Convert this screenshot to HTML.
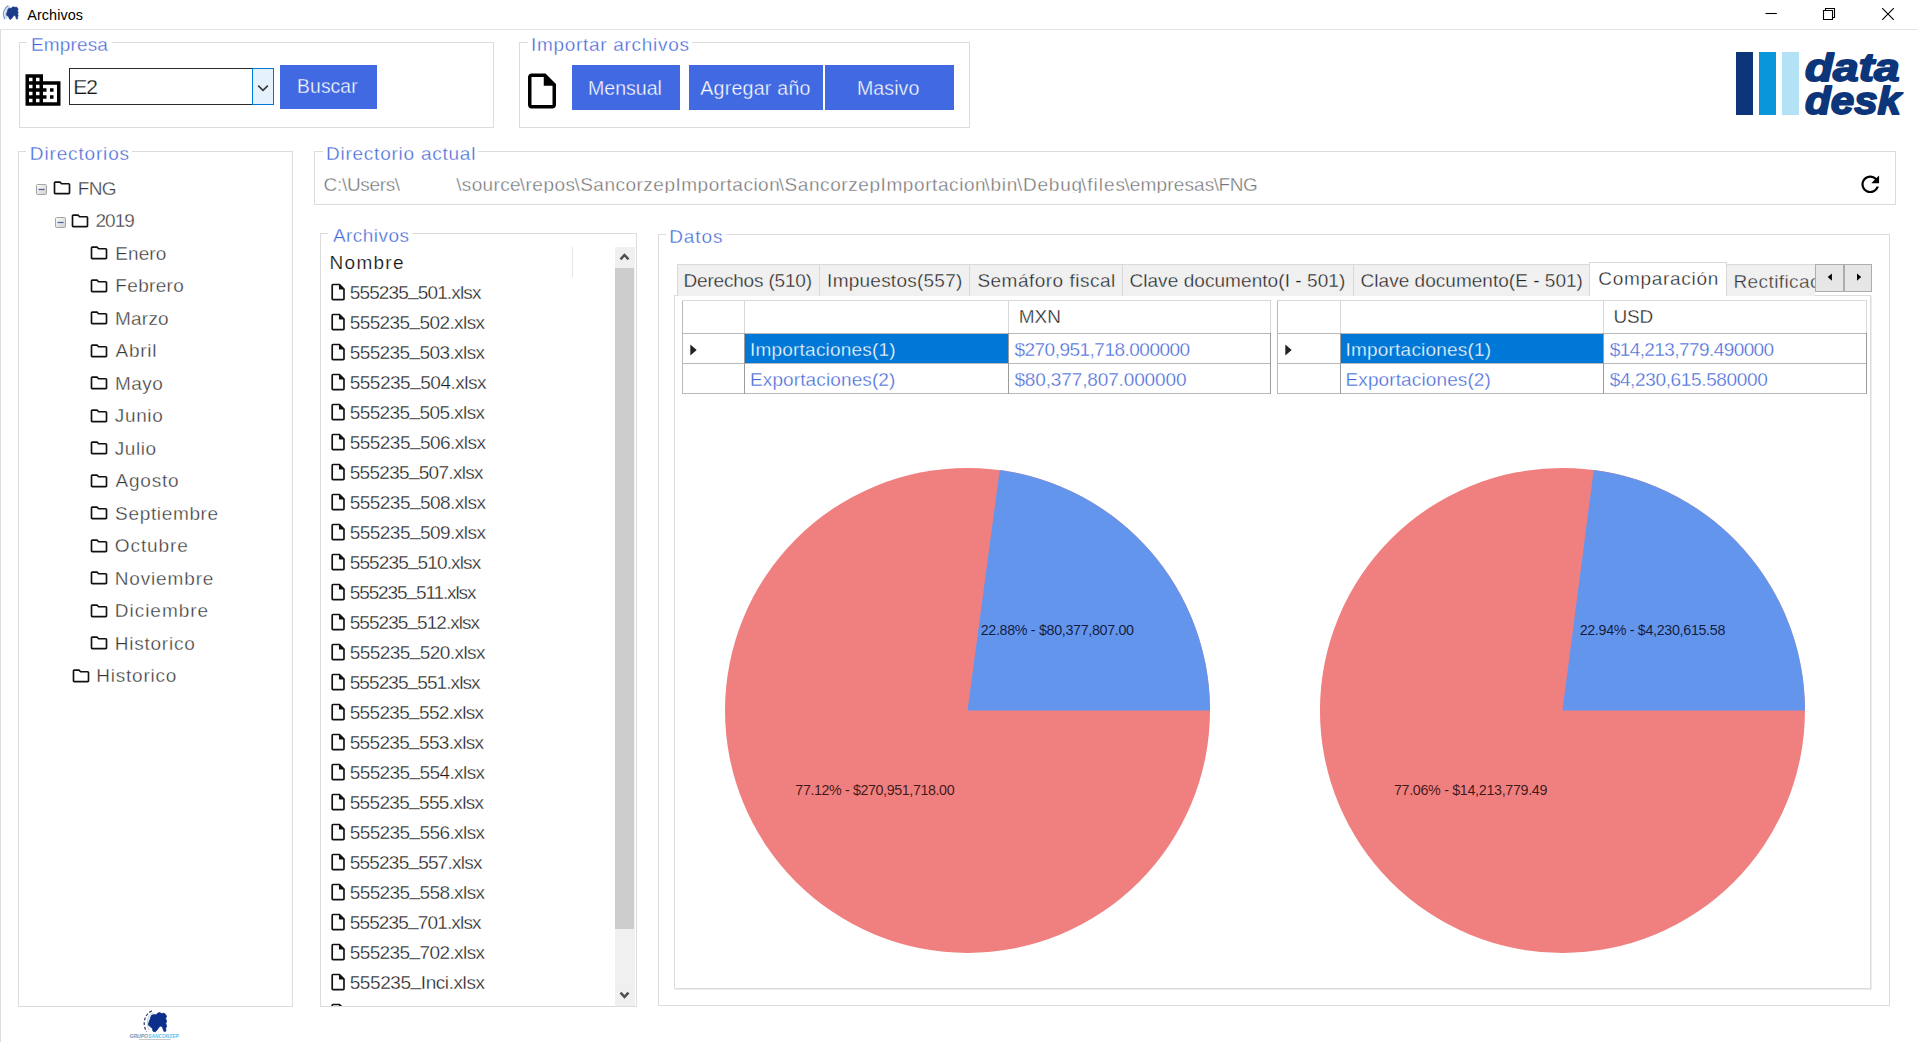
<!DOCTYPE html>
<html><head><meta charset="utf-8"><title>Archivos</title>
<style>
html,body{margin:0;padding:0;background:#fff;}
body{width:1917px;height:1042px;position:relative;overflow:hidden;font-family:"Liberation Sans", sans-serif;}
svg{display:block;overflow:visible}
</style></head><body>
<div style="position:absolute;left:0px;top:0px;width:1917px;height:29px;background:#fff;"></div>
<div style="position:absolute;left:0px;top:29px;width:1917px;height:1px;background:#e3e3e3;"></div>
<div style="position:absolute;left:0px;top:30px;width:1px;height:1012px;background:#dedede;"></div>
<svg style="position:absolute;left:1.8px;top:4.5px" width="17.16" height="15.18" viewBox="0 0 26 23"><polygon points="8.80,7.00 9.60,5.20 12.00,4.60 14.00,5.00 15.60,3.20 17.60,2.50 19.50,3.60 22.00,3.20 23.60,4.40 24.50,6.40 23.60,8.60 24.60,11.00 23.80,13.60 24.60,16.20 23.60,18.40 24.00,21.00 22.20,21.60 21.20,19.40 20.40,16.80 18.40,16.00 16.80,17.60 15.20,19.80 13.40,21.80 11.00,21.20 10.40,18.40 8.20,16.60 6.30,15.00 7.00,12.00 8.00,9.60" fill="#1d3b8b" stroke="#1d3b8b" stroke-width="0.8" stroke-linejoin="round"/><path d="M9.8 0.9C3.2 4 -0.5 13 4.6 21.6" fill="none" stroke="#6e90cc" stroke-width="1.9" stroke-dasharray="none" opacity="0.9"/><path d="M11.5 2.2C6 5.5 3.4 12.5 7 20" fill="none" stroke="#9db5de" stroke-width="1.6" opacity="0.7"/></svg>
<div style="position:absolute;left:27.20px;top:7.51px;font-size:14.4px;line-height:14.4px;color:#000;letter-spacing:0.091px;white-space:pre;">Archivos</div>
<svg style="position:absolute;left:1760px;top:0" width="150" height="29" viewBox="0 0 150 29"><g stroke="#000" stroke-width="1.1" fill="none"><path d="M5.5 13.5h11.3"/><path d="M63.5 10.5h9v9h-9z"/><path d="M65.5 10.5v-2h9v9h-2"/><path d="M122.2 8.2l11.6 11.6M133.800 8.2l-11.6 11.6"/></g></svg>
<div style="position:absolute;left:19px;top:42px;width:475px;height:86px;border:1px solid #dcdcdc;box-sizing:border-box;"></div>
<div style="position:absolute;left:27.4px;top:40px;width:84.6px;height:5px;background:#fff;"></div>
<div style="position:absolute;left:30.92px;top:35.22px;font-size:19px;line-height:19px;color:#4165d8;letter-spacing:0.156px;white-space:pre;-webkit-text-stroke:0.35px #fff;">Empresa</div>
<svg style="position:absolute;left:21.50px;top:69.00px" width="42" height="42" viewBox="0 0 24 24" preserveAspectRatio="none"><path fill="#000" d="M12 7V3H2v18h20V7H12zM6 19H4v-2h2v2zm0-4H4v-2h2v2zm0-4H4V9h2v2zm0-4H4V5h2v2zm4 12H8v-2h2v2zm0-4H8v-2h2v2zm0-4H8V9h2v2zm0-4H8V5h2v2zm10 12h-8v-2h2v-2h-2v-2h2v-2h-2V9h8v10zm-2-8h-2v2h2v-2zm0 4h-2v2h2v-2z"/></svg>
<div style="position:absolute;left:69px;top:68px;width:184px;height:37px;border:1px solid #2b2b2b;box-sizing:border-box;background:#fff;"></div>
<div style="position:absolute;left:252px;top:68px;width:22px;height:37px;border:1px solid #0078d7;box-sizing:border-box;background:#e5f1fb;"></div>
<svg style="position:absolute;left:255.6px;top:82.6px" width="14" height="10" viewBox="0 0 14 10"><path d="M2.2 2.6l4.800 4.800 4.800-4.800" stroke="#333" stroke-width="1.5" fill="none"/></svg>
<div style="position:absolute;left:73.26px;top:76.02px;font-size:21px;line-height:21px;color:#151515;letter-spacing:-1.094px;white-space:pre;-webkit-text-stroke:0.25px #fff;">E2</div>
<div style="position:absolute;left:280px;top:65px;width:97px;height:44px;background:#4169e1;"></div>
<div style="position:absolute;left:297.09px;top:77.46px;font-size:19.3px;line-height:19.3px;color:#fff;letter-spacing:0.107px;white-space:pre;-webkit-text-stroke:0.35px #4169e1;">Buscar</div>
<div style="position:absolute;left:519px;top:42px;width:451px;height:86px;border:1px solid #dcdcdc;box-sizing:border-box;"></div>
<div style="position:absolute;left:527.5px;top:40px;width:164.79999999999995px;height:5px;background:#fff;"></div>
<div style="position:absolute;left:531.02px;top:35.22px;font-size:19px;line-height:19px;color:#4165d8;letter-spacing:0.694px;white-space:pre;-webkit-text-stroke:0.35px #fff;">Importar archivos</div>
<svg style="position:absolute;left:521.30px;top:69.50px" width="42" height="42" viewBox="0 0 24 24" preserveAspectRatio="none"><path fill="#000" d="M14 2H6c-1.1 0-1.99.9-1.99 2L4 20c0 1.1.89 2 1.99 2H18c1.1 0 2-.9 2-2V8l-6-6zM6 20V4h7v5h5v11H6z"/></svg>
<div style="position:absolute;left:572px;top:65px;width:108px;height:45px;background:#4169e1;"></div>
<div style="position:absolute;left:588.07px;top:78.91px;font-size:19.6px;line-height:19.6px;color:#fff;letter-spacing:-0.027px;white-space:pre;-webkit-text-stroke:0.35px #4169e1;">Mensual</div>
<div style="position:absolute;left:689px;top:65px;width:134px;height:45px;background:#4169e1;"></div>
<div style="position:absolute;left:700.30px;top:78.91px;font-size:19.6px;line-height:19.6px;color:#fff;letter-spacing:0.232px;white-space:pre;-webkit-text-stroke:0.35px #4169e1;">Agregar año</div>
<div style="position:absolute;left:825px;top:65px;width:129px;height:45px;background:#4169e1;"></div>
<div style="position:absolute;left:856.97px;top:78.91px;font-size:19.6px;line-height:19.6px;color:#fff;letter-spacing:0.069px;white-space:pre;-webkit-text-stroke:0.35px #4169e1;">Masivo</div>
<div style="position:absolute;left:1736px;top:52px;width:17px;height:63px;background:#0d3579"></div>
<div style="position:absolute;left:1758.700px;top:52px;width:17px;height:63px;background:#0a96db"></div>
<div style="position:absolute;left:1781.5px;top:52px;width:17px;height:63px;background:#b3e2f6"></div>
<svg style="position:absolute;left:1800px;top:45px" width="110" height="80" viewBox="1800 45 110 80"><g font-family="Liberation Sans, sans-serif" font-weight="bold" font-style="italic" font-size="38.6" fill="#0d3579" stroke="#0d3579" stroke-width="1.8" stroke-linejoin="round"><text x="1805" y="81.3" textLength="94.5" lengthAdjust="spacingAndGlyphs">data</text><text x="1805" y="114" textLength="96" lengthAdjust="spacingAndGlyphs">desk</text></g></svg>
<div style="position:absolute;left:18px;top:151px;width:275px;height:856px;border:1px solid #dcdcdc;box-sizing:border-box;"></div>
<div style="position:absolute;left:26.3px;top:149px;width:106.2px;height:5px;background:#fff;"></div>
<div style="position:absolute;left:29.82px;top:143.82px;font-size:19px;line-height:19px;color:#4165d8;letter-spacing:0.848px;white-space:pre;-webkit-text-stroke:0.35px #fff;">Directorios</div>
<svg style="position:absolute;left:36px;top:184px" width="11" height="11" viewBox="0 0 11 11"><defs><linearGradient id="eg36" x1="0" y1="0" x2="1" y2="1"><stop offset="0" stop-color="#fdfdfd"/><stop offset="1" stop-color="#cfcfcf"/></linearGradient></defs><rect x="0.5" y="0.5" width="10" height="10" rx="1" fill="url(#eg36)" stroke="#a4a4a4"/><path d="M2.5 5.5h6" stroke="#4b5f96" stroke-width="1.2"/></svg>
<svg style="position:absolute;left:51.73px;top:178.07px" width="20.0" height="19.8" viewBox="0 0 24 24" preserveAspectRatio="none"><path fill="#111" d="M9.17 6l2 2H20v10H4V6h5.17M10 4H4c-1.1 0-1.99.9-1.99 2L2 18c0 1.1.9 2 2 2h16c1.1 0 2-.9 2-2V8c0-1.1-.9-2-2-2h-8l-2-2z"/></svg>
<div style="position:absolute;left:77.82px;top:178.72px;font-size:19px;line-height:19px;color:#363636;letter-spacing:-0.701px;white-space:pre;-webkit-text-stroke:0.35px #fff;">FNG</div>
<svg style="position:absolute;left:55px;top:216.5px" width="11" height="11" viewBox="0 0 11 11"><defs><linearGradient id="eg55" x1="0" y1="0" x2="1" y2="1"><stop offset="0" stop-color="#fdfdfd"/><stop offset="1" stop-color="#cfcfcf"/></linearGradient></defs><rect x="0.5" y="0.5" width="10" height="10" rx="1" fill="url(#eg55)" stroke="#a4a4a4"/><path d="M2.5 5.5h6" stroke="#4b5f96" stroke-width="1.2"/></svg>
<svg style="position:absolute;left:70.43px;top:210.77px" width="20.0" height="19.8" viewBox="0 0 24 24" preserveAspectRatio="none"><path fill="#111" d="M9.17 6l2 2H20v10H4V6h5.17M10 4H4c-1.1 0-1.99.9-1.99 2L2 18c0 1.1.9 2 2 2h16c1.1 0 2-.9 2-2V8c0-1.1-.9-2-2-2h-8l-2-2z"/></svg>
<div style="position:absolute;left:95.51px;top:211.32px;font-size:19px;line-height:19px;color:#363636;letter-spacing:-1.002px;white-space:pre;-webkit-text-stroke:0.35px #fff;">2019</div>
<svg style="position:absolute;left:89.33px;top:243.27px" width="20.0" height="19.8" viewBox="0 0 24 24" preserveAspectRatio="none"><path fill="#111" d="M9.17 6l2 2H20v10H4V6h5.17M10 4H4c-1.1 0-1.99.9-1.99 2L2 18c0 1.1.9 2 2 2h16c1.1 0 2-.9 2-2V8c0-1.1-.9-2-2-2h-8l-2-2z"/></svg>
<div style="position:absolute;left:115.32px;top:243.72px;font-size:19px;line-height:19px;color:#363636;letter-spacing:0.063px;white-space:pre;-webkit-text-stroke:0.35px #fff;">Enero</div>
<svg style="position:absolute;left:89.33px;top:275.77px" width="20.0" height="19.8" viewBox="0 0 24 24" preserveAspectRatio="none"><path fill="#111" d="M9.17 6l2 2H20v10H4V6h5.17M10 4H4c-1.1 0-1.99.9-1.99 2L2 18c0 1.1.9 2 2 2h16c1.1 0 2-.9 2-2V8c0-1.1-.9-2-2-2h-8l-2-2z"/></svg>
<div style="position:absolute;left:115.32px;top:276.22px;font-size:19px;line-height:19px;color:#363636;letter-spacing:0.321px;white-space:pre;-webkit-text-stroke:0.35px #fff;">Febrero</div>
<svg style="position:absolute;left:89.33px;top:308.27px" width="20.0" height="19.8" viewBox="0 0 24 24" preserveAspectRatio="none"><path fill="#111" d="M9.17 6l2 2H20v10H4V6h5.17M10 4H4c-1.1 0-1.99.9-1.99 2L2 18c0 1.1.9 2 2 2h16c1.1 0 2-.9 2-2V8c0-1.1-.9-2-2-2h-8l-2-2z"/></svg>
<div style="position:absolute;left:115.02px;top:308.72px;font-size:19px;line-height:19px;color:#363636;letter-spacing:0.217px;white-space:pre;-webkit-text-stroke:0.35px #fff;">Marzo</div>
<svg style="position:absolute;left:89.33px;top:340.77px" width="20.0" height="19.8" viewBox="0 0 24 24" preserveAspectRatio="none"><path fill="#111" d="M9.17 6l2 2H20v10H4V6h5.17M10 4H4c-1.1 0-1.99.9-1.99 2L2 18c0 1.1.9 2 2 2h16c1.1 0 2-.9 2-2V8c0-1.1-.9-2-2-2h-8l-2-2z"/></svg>
<div style="position:absolute;left:115.50px;top:341.22px;font-size:19px;line-height:19px;color:#363636;letter-spacing:0.736px;white-space:pre;-webkit-text-stroke:0.35px #fff;">Abril</div>
<svg style="position:absolute;left:89.33px;top:373.27px" width="20.0" height="19.8" viewBox="0 0 24 24" preserveAspectRatio="none"><path fill="#111" d="M9.17 6l2 2H20v10H4V6h5.17M10 4H4c-1.1 0-1.99.9-1.99 2L2 18c0 1.1.9 2 2 2h16c1.1 0 2-.9 2-2V8c0-1.1-.9-2-2-2h-8l-2-2z"/></svg>
<div style="position:absolute;left:115.02px;top:373.72px;font-size:19px;line-height:19px;color:#363636;letter-spacing:0.431px;white-space:pre;-webkit-text-stroke:0.35px #fff;">Mayo</div>
<svg style="position:absolute;left:89.33px;top:405.77px" width="20.0" height="19.8" viewBox="0 0 24 24" preserveAspectRatio="none"><path fill="#111" d="M9.17 6l2 2H20v10H4V6h5.17M10 4H4c-1.1 0-1.99.9-1.99 2L2 18c0 1.1.9 2 2 2h16c1.1 0 2-.9 2-2V8c0-1.1-.9-2-2-2h-8l-2-2z"/></svg>
<div style="position:absolute;left:114.80px;top:406.22px;font-size:19px;line-height:19px;color:#363636;letter-spacing:0.636px;white-space:pre;-webkit-text-stroke:0.35px #fff;">Junio</div>
<svg style="position:absolute;left:89.33px;top:438.27px" width="20.0" height="19.8" viewBox="0 0 24 24" preserveAspectRatio="none"><path fill="#111" d="M9.17 6l2 2H20v10H4V6h5.17M10 4H4c-1.1 0-1.99.9-1.99 2L2 18c0 1.1.9 2 2 2h16c1.1 0 2-.9 2-2V8c0-1.1-.9-2-2-2h-8l-2-2z"/></svg>
<div style="position:absolute;left:114.80px;top:438.72px;font-size:19px;line-height:19px;color:#363636;letter-spacing:0.523px;white-space:pre;-webkit-text-stroke:0.35px #fff;">Julio</div>
<svg style="position:absolute;left:89.33px;top:470.77px" width="20.0" height="19.8" viewBox="0 0 24 24" preserveAspectRatio="none"><path fill="#111" d="M9.17 6l2 2H20v10H4V6h5.17M10 4H4c-1.1 0-1.99.9-1.99 2L2 18c0 1.1.9 2 2 2h16c1.1 0 2-.9 2-2V8c0-1.1-.9-2-2-2h-8l-2-2z"/></svg>
<div style="position:absolute;left:115.50px;top:471.22px;font-size:19px;line-height:19px;color:#363636;letter-spacing:0.804px;white-space:pre;-webkit-text-stroke:0.35px #fff;">Agosto</div>
<svg style="position:absolute;left:89.33px;top:503.27px" width="20.0" height="19.8" viewBox="0 0 24 24" preserveAspectRatio="none"><path fill="#111" d="M9.17 6l2 2H20v10H4V6h5.17M10 4H4c-1.1 0-1.99.9-1.99 2L2 18c0 1.1.9 2 2 2h16c1.1 0 2-.9 2-2V8c0-1.1-.9-2-2-2h-8l-2-2z"/></svg>
<div style="position:absolute;left:115.11px;top:503.72px;font-size:19px;line-height:19px;color:#363636;letter-spacing:0.656px;white-space:pre;-webkit-text-stroke:0.35px #fff;">Septiembre</div>
<svg style="position:absolute;left:89.33px;top:535.77px" width="20.0" height="19.8" viewBox="0 0 24 24" preserveAspectRatio="none"><path fill="#111" d="M9.17 6l2 2H20v10H4V6h5.17M10 4H4c-1.1 0-1.99.9-1.99 2L2 18c0 1.1.9 2 2 2h16c1.1 0 2-.9 2-2V8c0-1.1-.9-2-2-2h-8l-2-2z"/></svg>
<div style="position:absolute;left:114.81px;top:536.22px;font-size:19px;line-height:19px;color:#363636;letter-spacing:0.913px;white-space:pre;-webkit-text-stroke:0.35px #fff;">Octubre</div>
<svg style="position:absolute;left:89.33px;top:568.27px" width="20.0" height="19.8" viewBox="0 0 24 24" preserveAspectRatio="none"><path fill="#111" d="M9.17 6l2 2H20v10H4V6h5.17M10 4H4c-1.1 0-1.99.9-1.99 2L2 18c0 1.1.9 2 2 2h16c1.1 0 2-.9 2-2V8c0-1.1-.9-2-2-2h-8l-2-2z"/></svg>
<div style="position:absolute;left:114.72px;top:568.72px;font-size:19px;line-height:19px;color:#363636;letter-spacing:0.849px;white-space:pre;-webkit-text-stroke:0.35px #fff;">Noviembre</div>
<svg style="position:absolute;left:89.33px;top:600.77px" width="20.0" height="19.8" viewBox="0 0 24 24" preserveAspectRatio="none"><path fill="#111" d="M9.17 6l2 2H20v10H4V6h5.17M10 4H4c-1.1 0-1.99.9-1.99 2L2 18c0 1.1.9 2 2 2h16c1.1 0 2-.9 2-2V8c0-1.1-.9-2-2-2h-8l-2-2z"/></svg>
<div style="position:absolute;left:114.72px;top:601.22px;font-size:19px;line-height:19px;color:#363636;letter-spacing:0.992px;white-space:pre;-webkit-text-stroke:0.35px #fff;">Diciembre</div>
<svg style="position:absolute;left:89.33px;top:633.27px" width="20.0" height="19.8" viewBox="0 0 24 24" preserveAspectRatio="none"><path fill="#111" d="M9.17 6l2 2H20v10H4V6h5.17M10 4H4c-1.1 0-1.99.9-1.99 2L2 18c0 1.1.9 2 2 2h16c1.1 0 2-.9 2-2V8c0-1.1-.9-2-2-2h-8l-2-2z"/></svg>
<div style="position:absolute;left:114.72px;top:633.72px;font-size:19px;line-height:19px;color:#363636;letter-spacing:0.769px;white-space:pre;-webkit-text-stroke:0.35px #fff;">Historico</div>
<svg style="position:absolute;left:70.83px;top:665.77px" width="20.0" height="19.8" viewBox="0 0 24 24" preserveAspectRatio="none"><path fill="#111" d="M9.17 6l2 2H20v10H4V6h5.17M10 4H4c-1.1 0-1.99.9-1.99 2L2 18c0 1.1.9 2 2 2h16c1.1 0 2-.9 2-2V8c0-1.1-.9-2-2-2h-8l-2-2z"/></svg>
<div style="position:absolute;left:96.32px;top:666.22px;font-size:19px;line-height:19px;color:#363636;letter-spacing:0.756px;white-space:pre;-webkit-text-stroke:0.35px #fff;">Historico</div>
<div style="position:absolute;left:314px;top:151px;width:1582px;height:54px;border:1px solid #dcdcdc;box-sizing:border-box;"></div>
<div style="position:absolute;left:322.5px;top:149px;width:155.60000000000002px;height:5px;background:#fff;"></div>
<div style="position:absolute;left:326.02px;top:144.32px;font-size:19px;line-height:19px;color:#4165d8;letter-spacing:0.754px;white-space:pre;-webkit-text-stroke:0.35px #fff;">Directorio actual</div>
<div style="position:absolute;left:323.61px;top:175.42px;font-size:19px;line-height:19px;color:#747474;letter-spacing:-0.331px;white-space:pre;-webkit-text-stroke:0.35px #fff;">C:\Users\</div>
<div style="position:absolute;left:456.20px;top:175.42px;font-size:19px;line-height:19px;color:#747474;letter-spacing:0.344px;white-space:pre;-webkit-text-stroke:0.35px #fff;">\source</div>
<div style="position:absolute;left:519.80px;top:175.42px;font-size:19px;line-height:19px;color:#747474;letter-spacing:0.477px;white-space:pre;-webkit-text-stroke:0.35px #fff;">\repos</div>
<div style="position:absolute;left:574.40px;top:175.42px;font-size:19px;line-height:19px;color:#747474;letter-spacing:0.499px;white-space:pre;-webkit-text-stroke:0.35px #fff;">\SancorzepImportacion</div>
<div style="position:absolute;left:778.70px;top:175.42px;font-size:19px;line-height:19px;color:#747474;letter-spacing:0.579px;white-space:pre;-webkit-text-stroke:0.35px #fff;">\SancorzepImportacion</div>
<div style="position:absolute;left:984.60px;top:175.42px;font-size:19px;line-height:19px;color:#747474;letter-spacing:0.711px;white-space:pre;-webkit-text-stroke:0.35px #fff;">\bin</div>
<div style="position:absolute;left:1017.00px;top:175.42px;font-size:19px;line-height:19px;color:#747474;letter-spacing:0.760px;white-space:pre;-webkit-text-stroke:0.35px #fff;">\Debug</div>
<div style="position:absolute;left:1081.00px;top:175.42px;font-size:19px;line-height:19px;color:#747474;letter-spacing:0.985px;white-space:pre;-webkit-text-stroke:0.35px #fff;">\files</div>
<div style="position:absolute;left:1124.40px;top:175.42px;font-size:19px;line-height:19px;color:#747474;letter-spacing:0.149px;white-space:pre;-webkit-text-stroke:0.35px #fff;">\empresas</div>
<div style="position:absolute;left:1213.70px;top:175.42px;font-size:19px;line-height:19px;color:#747474;letter-spacing:-0.455px;white-space:pre;-webkit-text-stroke:0.35px #fff;">\FNG</div>
<div style="position:absolute;left:320px;top:193px;width:1500px;height:10px;background:#fff;"></div>
<svg style="position:absolute;left:1857.00px;top:171.20px" width="26.5" height="26.5" viewBox="0 0 24 24" preserveAspectRatio="none"><path fill="#000" d="M17.65 6.35C16.2 4.9 14.21 4 12 4c-4.42 0-7.99 3.58-7.99 8s3.57 8 7.99 8c3.73 0 6.84-2.55 7.73-6h-2.08c-.82 2.33-3.04 4-5.65 4-3.31 0-6-2.69-6-6s2.69-6 6-6c1.66 0 3.14.69 4.22 1.78L13 11h7V4l-2.35 2.35z"/></svg>
<div style="position:absolute;left:320px;top:233px;width:317px;height:774px;border:1px solid #dcdcdc;box-sizing:border-box;"></div>
<div style="position:absolute;left:327.9px;top:231px;width:84.60000000000002px;height:5px;background:#fff;"></div>
<div style="position:absolute;left:332.90px;top:226.12px;font-size:19px;line-height:19px;color:#4165d8;letter-spacing:0.477px;white-space:pre;-webkit-text-stroke:0.35px #fff;">Archivos</div>
<div style="position:absolute;left:329.62px;top:252.82px;font-size:19px;line-height:19px;color:#141414;letter-spacing:1.256px;white-space:pre;-webkit-text-stroke:0.2px #fff;">Nombre</div>
<div style="position:absolute;left:572px;top:247px;width:1px;height:30px;background:#e5e5e5;"></div>
<div style="position:absolute;left:615px;top:247px;width:20px;height:759px;background:#f0f0f0;"></div>
<div style="position:absolute;left:615px;top:268px;width:19px;height:661px;background:#cdcdcd;"></div>
<svg style="position:absolute;left:615px;top:247px" width="20" height="21" viewBox="0 0 20 21"><path d="M5.5 12.3L9.5 8L13.5 12.3" stroke="#505050" stroke-width="2.5" fill="none"/></svg>
<svg style="position:absolute;left:615px;top:985px" width="20" height="21" viewBox="0 0 20 21"><path d="M5.5 7.600L9.5 11.900L13.5 7.600" stroke="#505050" stroke-width="2.5" fill="none"/></svg>
<svg style="position:absolute;left:327.83px;top:281.92px" width="20.2" height="20.2" viewBox="0 0 24 24" preserveAspectRatio="none"><path fill="#111" d="M14 2H6c-1.1 0-1.99.9-1.99 2L4 20c0 1.1.89 2 1.99 2H18c1.1 0 2-.9 2-2V8l-6-6zM6 20V4h7v5h5v11H6z"/></svg>
<div style="position:absolute;left:349.71px;top:282.62px;font-size:19px;line-height:19px;color:#1c1c1c;letter-spacing:-0.855px;white-space:pre;-webkit-text-stroke:0.3px #fff;">555235<span style="position:relative;top:-3.6px">_</span>501.xlsx</div>
<svg style="position:absolute;left:327.83px;top:311.92px" width="20.2" height="20.2" viewBox="0 0 24 24" preserveAspectRatio="none"><path fill="#111" d="M14 2H6c-1.1 0-1.99.9-1.99 2L4 20c0 1.1.89 2 1.99 2H18c1.1 0 2-.9 2-2V8l-6-6zM6 20V4h7v5h5v11H6z"/></svg>
<div style="position:absolute;left:349.71px;top:312.62px;font-size:19px;line-height:19px;color:#1c1c1c;letter-spacing:-0.598px;white-space:pre;-webkit-text-stroke:0.3px #fff;">555235<span style="position:relative;top:-3.6px">_</span>502.xlsx</div>
<svg style="position:absolute;left:327.83px;top:341.92px" width="20.2" height="20.2" viewBox="0 0 24 24" preserveAspectRatio="none"><path fill="#111" d="M14 2H6c-1.1 0-1.99.9-1.99 2L4 20c0 1.1.89 2 1.99 2H18c1.1 0 2-.9 2-2V8l-6-6zM6 20V4h7v5h5v11H6z"/></svg>
<div style="position:absolute;left:349.71px;top:342.62px;font-size:19px;line-height:19px;color:#1c1c1c;letter-spacing:-0.598px;white-space:pre;-webkit-text-stroke:0.3px #fff;">555235<span style="position:relative;top:-3.6px">_</span>503.xlsx</div>
<svg style="position:absolute;left:327.83px;top:371.92px" width="20.2" height="20.2" viewBox="0 0 24 24" preserveAspectRatio="none"><path fill="#111" d="M14 2H6c-1.1 0-1.99.9-1.99 2L4 20c0 1.1.89 2 1.99 2H18c1.1 0 2-.9 2-2V8l-6-6zM6 20V4h7v5h5v11H6z"/></svg>
<div style="position:absolute;left:349.71px;top:372.62px;font-size:19px;line-height:19px;color:#1c1c1c;letter-spacing:-0.491px;white-space:pre;-webkit-text-stroke:0.3px #fff;">555235<span style="position:relative;top:-3.6px">_</span>504.xlsx</div>
<svg style="position:absolute;left:327.83px;top:401.92px" width="20.2" height="20.2" viewBox="0 0 24 24" preserveAspectRatio="none"><path fill="#111" d="M14 2H6c-1.1 0-1.99.9-1.99 2L4 20c0 1.1.89 2 1.99 2H18c1.1 0 2-.9 2-2V8l-6-6zM6 20V4h7v5h5v11H6z"/></svg>
<div style="position:absolute;left:349.71px;top:402.62px;font-size:19px;line-height:19px;color:#1c1c1c;letter-spacing:-0.598px;white-space:pre;-webkit-text-stroke:0.3px #fff;">555235<span style="position:relative;top:-3.6px">_</span>505.xlsx</div>
<svg style="position:absolute;left:327.83px;top:431.92px" width="20.2" height="20.2" viewBox="0 0 24 24" preserveAspectRatio="none"><path fill="#111" d="M14 2H6c-1.1 0-1.99.9-1.99 2L4 20c0 1.1.89 2 1.99 2H18c1.1 0 2-.9 2-2V8l-6-6zM6 20V4h7v5h5v11H6z"/></svg>
<div style="position:absolute;left:349.71px;top:432.62px;font-size:19px;line-height:19px;color:#1c1c1c;letter-spacing:-0.527px;white-space:pre;-webkit-text-stroke:0.3px #fff;">555235<span style="position:relative;top:-3.6px">_</span>506.xlsx</div>
<svg style="position:absolute;left:327.83px;top:461.92px" width="20.2" height="20.2" viewBox="0 0 24 24" preserveAspectRatio="none"><path fill="#111" d="M14 2H6c-1.1 0-1.99.9-1.99 2L4 20c0 1.1.89 2 1.99 2H18c1.1 0 2-.9 2-2V8l-6-6zM6 20V4h7v5h5v11H6z"/></svg>
<div style="position:absolute;left:349.71px;top:462.62px;font-size:19px;line-height:19px;color:#1c1c1c;letter-spacing:-0.705px;white-space:pre;-webkit-text-stroke:0.3px #fff;">555235<span style="position:relative;top:-3.6px">_</span>507.xlsx</div>
<svg style="position:absolute;left:327.83px;top:491.92px" width="20.2" height="20.2" viewBox="0 0 24 24" preserveAspectRatio="none"><path fill="#111" d="M14 2H6c-1.1 0-1.99.9-1.99 2L4 20c0 1.1.89 2 1.99 2H18c1.1 0 2-.9 2-2V8l-6-6zM6 20V4h7v5h5v11H6z"/></svg>
<div style="position:absolute;left:349.71px;top:492.62px;font-size:19px;line-height:19px;color:#1c1c1c;letter-spacing:-0.527px;white-space:pre;-webkit-text-stroke:0.3px #fff;">555235<span style="position:relative;top:-3.6px">_</span>508.xlsx</div>
<svg style="position:absolute;left:327.83px;top:521.92px" width="20.2" height="20.2" viewBox="0 0 24 24" preserveAspectRatio="none"><path fill="#111" d="M14 2H6c-1.1 0-1.99.9-1.99 2L4 20c0 1.1.89 2 1.99 2H18c1.1 0 2-.9 2-2V8l-6-6zM6 20V4h7v5h5v11H6z"/></svg>
<div style="position:absolute;left:349.71px;top:522.62px;font-size:19px;line-height:19px;color:#1c1c1c;letter-spacing:-0.527px;white-space:pre;-webkit-text-stroke:0.3px #fff;">555235<span style="position:relative;top:-3.6px">_</span>509.xlsx</div>
<svg style="position:absolute;left:327.83px;top:551.92px" width="20.2" height="20.2" viewBox="0 0 24 24" preserveAspectRatio="none"><path fill="#111" d="M14 2H6c-1.1 0-1.99.9-1.99 2L4 20c0 1.1.89 2 1.99 2H18c1.1 0 2-.9 2-2V8l-6-6zM6 20V4h7v5h5v11H6z"/></svg>
<div style="position:absolute;left:349.71px;top:552.62px;font-size:19px;line-height:19px;color:#1c1c1c;letter-spacing:-0.870px;white-space:pre;-webkit-text-stroke:0.3px #fff;">555235<span style="position:relative;top:-3.6px">_</span>510.xlsx</div>
<svg style="position:absolute;left:327.83px;top:581.92px" width="20.2" height="20.2" viewBox="0 0 24 24" preserveAspectRatio="none"><path fill="#111" d="M14 2H6c-1.1 0-1.99.9-1.99 2L4 20c0 1.1.89 2 1.99 2H18c1.1 0 2-.9 2-2V8l-6-6zM6 20V4h7v5h5v11H6z"/></svg>
<div style="position:absolute;left:349.71px;top:582.62px;font-size:19px;line-height:19px;color:#1c1c1c;letter-spacing:-1.105px;white-space:pre;-webkit-text-stroke:0.3px #fff;">555235<span style="position:relative;top:-3.6px">_</span>511.xlsx</div>
<svg style="position:absolute;left:327.83px;top:611.92px" width="20.2" height="20.2" viewBox="0 0 24 24" preserveAspectRatio="none"><path fill="#111" d="M14 2H6c-1.1 0-1.99.9-1.99 2L4 20c0 1.1.89 2 1.99 2H18c1.1 0 2-.9 2-2V8l-6-6zM6 20V4h7v5h5v11H6z"/></svg>
<div style="position:absolute;left:349.71px;top:612.62px;font-size:19px;line-height:19px;color:#1c1c1c;letter-spacing:-0.948px;white-space:pre;-webkit-text-stroke:0.3px #fff;">555235<span style="position:relative;top:-3.6px">_</span>512.xlsx</div>
<svg style="position:absolute;left:327.83px;top:641.92px" width="20.2" height="20.2" viewBox="0 0 24 24" preserveAspectRatio="none"><path fill="#111" d="M14 2H6c-1.1 0-1.99.9-1.99 2L4 20c0 1.1.89 2 1.99 2H18c1.1 0 2-.9 2-2V8l-6-6zM6 20V4h7v5h5v11H6z"/></svg>
<div style="position:absolute;left:349.71px;top:642.62px;font-size:19px;line-height:19px;color:#1c1c1c;letter-spacing:-0.563px;white-space:pre;-webkit-text-stroke:0.3px #fff;">555235<span style="position:relative;top:-3.6px">_</span>520.xlsx</div>
<svg style="position:absolute;left:327.83px;top:671.92px" width="20.2" height="20.2" viewBox="0 0 24 24" preserveAspectRatio="none"><path fill="#111" d="M14 2H6c-1.1 0-1.99.9-1.99 2L4 20c0 1.1.89 2 1.99 2H18c1.1 0 2-.9 2-2V8l-6-6zM6 20V4h7v5h5v11H6z"/></svg>
<div style="position:absolute;left:349.71px;top:672.62px;font-size:19px;line-height:19px;color:#1c1c1c;letter-spacing:-0.920px;white-space:pre;-webkit-text-stroke:0.3px #fff;">555235<span style="position:relative;top:-3.6px">_</span>551.xlsx</div>
<svg style="position:absolute;left:327.83px;top:701.92px" width="20.2" height="20.2" viewBox="0 0 24 24" preserveAspectRatio="none"><path fill="#111" d="M14 2H6c-1.1 0-1.99.9-1.99 2L4 20c0 1.1.89 2 1.99 2H18c1.1 0 2-.9 2-2V8l-6-6zM6 20V4h7v5h5v11H6z"/></svg>
<div style="position:absolute;left:349.71px;top:702.62px;font-size:19px;line-height:19px;color:#1c1c1c;letter-spacing:-0.670px;white-space:pre;-webkit-text-stroke:0.3px #fff;">555235<span style="position:relative;top:-3.6px">_</span>552.xlsx</div>
<svg style="position:absolute;left:327.83px;top:731.92px" width="20.2" height="20.2" viewBox="0 0 24 24" preserveAspectRatio="none"><path fill="#111" d="M14 2H6c-1.1 0-1.99.9-1.99 2L4 20c0 1.1.89 2 1.99 2H18c1.1 0 2-.9 2-2V8l-6-6zM6 20V4h7v5h5v11H6z"/></svg>
<div style="position:absolute;left:349.71px;top:732.62px;font-size:19px;line-height:19px;color:#1c1c1c;letter-spacing:-0.670px;white-space:pre;-webkit-text-stroke:0.3px #fff;">555235<span style="position:relative;top:-3.6px">_</span>553.xlsx</div>
<svg style="position:absolute;left:327.83px;top:761.92px" width="20.2" height="20.2" viewBox="0 0 24 24" preserveAspectRatio="none"><path fill="#111" d="M14 2H6c-1.1 0-1.99.9-1.99 2L4 20c0 1.1.89 2 1.99 2H18c1.1 0 2-.9 2-2V8l-6-6zM6 20V4h7v5h5v11H6z"/></svg>
<div style="position:absolute;left:349.71px;top:762.62px;font-size:19px;line-height:19px;color:#1c1c1c;letter-spacing:-0.598px;white-space:pre;-webkit-text-stroke:0.3px #fff;">555235<span style="position:relative;top:-3.6px">_</span>554.xlsx</div>
<svg style="position:absolute;left:327.83px;top:791.92px" width="20.2" height="20.2" viewBox="0 0 24 24" preserveAspectRatio="none"><path fill="#111" d="M14 2H6c-1.1 0-1.99.9-1.99 2L4 20c0 1.1.89 2 1.99 2H18c1.1 0 2-.9 2-2V8l-6-6zM6 20V4h7v5h5v11H6z"/></svg>
<div style="position:absolute;left:349.71px;top:792.62px;font-size:19px;line-height:19px;color:#1c1c1c;letter-spacing:-0.670px;white-space:pre;-webkit-text-stroke:0.3px #fff;">555235<span style="position:relative;top:-3.6px">_</span>555.xlsx</div>
<svg style="position:absolute;left:327.83px;top:821.92px" width="20.2" height="20.2" viewBox="0 0 24 24" preserveAspectRatio="none"><path fill="#111" d="M14 2H6c-1.1 0-1.99.9-1.99 2L4 20c0 1.1.89 2 1.99 2H18c1.1 0 2-.9 2-2V8l-6-6zM6 20V4h7v5h5v11H6z"/></svg>
<div style="position:absolute;left:349.71px;top:822.62px;font-size:19px;line-height:19px;color:#1c1c1c;letter-spacing:-0.598px;white-space:pre;-webkit-text-stroke:0.3px #fff;">555235<span style="position:relative;top:-3.6px">_</span>556.xlsx</div>
<svg style="position:absolute;left:327.83px;top:851.92px" width="20.2" height="20.2" viewBox="0 0 24 24" preserveAspectRatio="none"><path fill="#111" d="M14 2H6c-1.1 0-1.99.9-1.99 2L4 20c0 1.1.89 2 1.99 2H18c1.1 0 2-.9 2-2V8l-6-6zM6 20V4h7v5h5v11H6z"/></svg>
<div style="position:absolute;left:349.71px;top:852.62px;font-size:19px;line-height:19px;color:#1c1c1c;letter-spacing:-0.777px;white-space:pre;-webkit-text-stroke:0.3px #fff;">555235<span style="position:relative;top:-3.6px">_</span>557.xlsx</div>
<svg style="position:absolute;left:327.83px;top:881.92px" width="20.2" height="20.2" viewBox="0 0 24 24" preserveAspectRatio="none"><path fill="#111" d="M14 2H6c-1.1 0-1.99.9-1.99 2L4 20c0 1.1.89 2 1.99 2H18c1.1 0 2-.9 2-2V8l-6-6zM6 20V4h7v5h5v11H6z"/></svg>
<div style="position:absolute;left:349.71px;top:882.62px;font-size:19px;line-height:19px;color:#1c1c1c;letter-spacing:-0.598px;white-space:pre;-webkit-text-stroke:0.3px #fff;">555235<span style="position:relative;top:-3.6px">_</span>558.xlsx</div>
<svg style="position:absolute;left:327.83px;top:911.92px" width="20.2" height="20.2" viewBox="0 0 24 24" preserveAspectRatio="none"><path fill="#111" d="M14 2H6c-1.1 0-1.99.9-1.99 2L4 20c0 1.1.89 2 1.99 2H18c1.1 0 2-.9 2-2V8l-6-6zM6 20V4h7v5h5v11H6z"/></svg>
<div style="position:absolute;left:349.71px;top:912.62px;font-size:19px;line-height:19px;color:#1c1c1c;letter-spacing:-0.848px;white-space:pre;-webkit-text-stroke:0.3px #fff;">555235<span style="position:relative;top:-3.6px">_</span>701.xlsx</div>
<svg style="position:absolute;left:327.83px;top:941.92px" width="20.2" height="20.2" viewBox="0 0 24 24" preserveAspectRatio="none"><path fill="#111" d="M14 2H6c-1.1 0-1.99.9-1.99 2L4 20c0 1.1.89 2 1.99 2H18c1.1 0 2-.9 2-2V8l-6-6zM6 20V4h7v5h5v11H6z"/></svg>
<div style="position:absolute;left:349.71px;top:942.62px;font-size:19px;line-height:19px;color:#1c1c1c;letter-spacing:-0.598px;white-space:pre;-webkit-text-stroke:0.3px #fff;">555235<span style="position:relative;top:-3.6px">_</span>702.xlsx</div>
<svg style="position:absolute;left:327.83px;top:971.92px" width="20.2" height="20.2" viewBox="0 0 24 24" preserveAspectRatio="none"><path fill="#111" d="M14 2H6c-1.1 0-1.99.9-1.99 2L4 20c0 1.1.89 2 1.99 2H18c1.1 0 2-.9 2-2V8l-6-6zM6 20V4h7v5h5v11H6z"/></svg>
<div style="position:absolute;left:349.71px;top:972.62px;font-size:19px;line-height:19px;color:#1c1c1c;letter-spacing:-0.416px;white-space:pre;-webkit-text-stroke:0.3px #fff;">555235<span style="position:relative;top:-3.6px">_</span>Inci.xlsx</div>
<div style="position:absolute;left:321px;top:1000px;width:294px;height:6px;overflow:hidden;"><svg style="position:absolute;left:6.83px;top:1.92px" width="20.2" height="20.2" viewBox="0 0 24 24"><path fill="#111" d="M14 2H6c-1.1 0-1.99.9-1.99 2L4 20c0 1.1.89 2 1.99 2H18c1.1 0 2-.9 2-2V8l-6-6zM6 20V4h7v5h5v11H6z"/></svg></div>
<div style="position:absolute;left:658px;top:234px;width:1232px;height:772px;border:1px solid #dcdcdc;box-sizing:border-box;"></div>
<div style="position:absolute;left:665.7px;top:232px;width:60.09999999999991px;height:5px;background:#fff;"></div>
<div style="position:absolute;left:669.22px;top:227.22px;font-size:19px;line-height:19px;color:#4165d8;letter-spacing:0.886px;white-space:pre;-webkit-text-stroke:0.35px #fff;">Datos</div>
<div style="position:absolute;left:674px;top:295px;width:1197px;height:694px;border:1px solid #dcdcdc;box-sizing:border-box;background:#fff;box-shadow:1px 1px 0 #ececec;"></div>
<div style="position:absolute;left:676.5px;top:264px;width:143.89999999999998px;height:31.5px;background:#f0f0f0;border:1px solid #d9d9d9;border-bottom:none;box-sizing:border-box;"></div>
<div style="position:absolute;left:683.52px;top:271.12px;font-size:19px;line-height:19px;color:#202020;letter-spacing:-0.191px;white-space:pre;-webkit-text-stroke:0.35px #f0f0f0;">Derechos (510)</div>
<div style="position:absolute;left:819.4px;top:264px;width:150.80000000000007px;height:31.5px;background:#f0f0f0;border:1px solid #d9d9d9;border-bottom:none;box-sizing:border-box;"></div>
<div style="position:absolute;left:827.12px;top:271.12px;font-size:19px;line-height:19px;color:#202020;letter-spacing:0.243px;white-space:pre;-webkit-text-stroke:0.35px #f0f0f0;">Impuestos(557)</div>
<div style="position:absolute;left:969.2px;top:264px;width:153.39999999999986px;height:31.5px;background:#f0f0f0;border:1px solid #d9d9d9;border-bottom:none;box-sizing:border-box;"></div>
<div style="position:absolute;left:977.41px;top:271.12px;font-size:19px;line-height:19px;color:#202020;letter-spacing:0.486px;white-space:pre;-webkit-text-stroke:0.35px #f0f0f0;">Semáforo fiscal</div>
<div style="position:absolute;left:1121.6px;top:264px;width:232.4000000000001px;height:31.5px;background:#f0f0f0;border:1px solid #d9d9d9;border-bottom:none;box-sizing:border-box;"></div>
<div style="position:absolute;left:1129.41px;top:271.12px;font-size:19px;line-height:19px;color:#202020;letter-spacing:0.065px;white-space:pre;-webkit-text-stroke:0.35px #f0f0f0;">Clave documento(I - 501)</div>
<div style="position:absolute;left:1353px;top:264px;width:237.20000000000005px;height:31.5px;background:#f0f0f0;border:1px solid #d9d9d9;border-bottom:none;box-sizing:border-box;"></div>
<div style="position:absolute;left:1360.61px;top:271.12px;font-size:19px;line-height:19px;color:#202020;letter-spacing:0.022px;white-space:pre;-webkit-text-stroke:0.35px #f0f0f0;">Clave documento(E - 501)</div>
<div style="position:absolute;left:1726px;top:264px;width:89px;height:31.5px;background:#f0f0f0;border:1px solid #d9d9d9;border-bottom:none;border-right:none;box-sizing:border-box;overflow:hidden;"><div style="position:absolute;left:6.4px;top:6.8px;font-size:19px;line-height:19px;color:#303030;letter-spacing:0.42px;white-space:pre;-webkit-text-stroke:0.35px #f0f0f0">Rectificaciones</div></div>
<div style="position:absolute;left:1589px;top:262px;width:138px;height:34px;background:#fff;border:1px solid #d9d9d9;border-bottom:none;box-sizing:border-box;"></div>
<div style="position:absolute;left:1598.31px;top:268.72px;font-size:19px;line-height:19px;color:#202020;letter-spacing:0.696px;white-space:pre;-webkit-text-stroke:0.35px #fff;">Comparación</div>
<div style="position:absolute;left:1815px;top:264px;width:29px;height:28px;background:#e6e6e6;border:1px solid #adadad;box-sizing:border-box;"></div>
<svg style="position:absolute;left:1826.5px;top:272px" width="6" height="10"><path d="M4.9 1.5v7.2L0.7 5.1z" fill="#000"/></svg>
<div style="position:absolute;left:1844px;top:264px;width:28px;height:28px;background:#e6e6e6;border:1px solid #adadad;box-sizing:border-box;"></div>
<svg style="position:absolute;left:1855.5px;top:272px" width="6" height="10"><path d="M1 1.5v7.2L5.2 5.1z" fill="#000"/></svg>
<div style="position:absolute;left:681.5px;top:300px;width:589.5px;height:93.5px;border-left:1px solid #b8b8b8;box-sizing:border-box;"></div>
<div style="position:absolute;left:681.5px;top:300px;width:589.5px;height:1px;background:#d8d8d8;"></div>
<div style="position:absolute;left:744.0px;top:300px;width:1px;height:33px;background:#d8d8d8;"></div>
<div style="position:absolute;left:1007.5px;top:300px;width:1px;height:33px;background:#d8d8d8;"></div>
<div style="position:absolute;left:1270.0px;top:300px;width:1px;height:33px;background:#d8d8d8;"></div>
<div style="position:absolute;left:682.5px;top:333px;width:588.5px;height:1px;background:#b8b8b8;"></div>
<div style="position:absolute;left:682.5px;top:363px;width:588.5px;height:1px;background:#b8b8b8;"></div>
<div style="position:absolute;left:682.5px;top:392.5px;width:588.5px;height:1px;background:#b8b8b8;"></div>
<div style="position:absolute;left:744.0px;top:333px;width:1px;height:60.5px;background:#9c9c9c;"></div>
<div style="position:absolute;left:1007.5px;top:333px;width:1px;height:60.5px;background:#9c9c9c;"></div>
<div style="position:absolute;left:1270.0px;top:333px;width:1px;height:60.5px;background:#9c9c9c;"></div>
<div style="position:absolute;left:745.0px;top:334px;width:262.5px;height:29px;background:#0078d7;"></div>
<svg style="position:absolute;left:689.7px;top:344px" width="8" height="12"><path d="M0.3 0.4v11.2L6.7 6z" fill="#222"/></svg>
<div style="position:absolute;left:1018.72px;top:307.42px;font-size:19px;line-height:19px;color:#202020;letter-spacing:0.006px;white-space:pre;-webkit-text-stroke:0.35px #fff;">MXN</div>
<div style="position:absolute;left:750.02px;top:340.02px;font-size:19px;line-height:19px;color:#fff;letter-spacing:0.207px;white-space:pre;-webkit-text-stroke:0.35px #0078d7;">Importaciones(1)</div>
<div style="position:absolute;left:750.02px;top:370.02px;font-size:19px;line-height:19px;color:#4165d8;letter-spacing:0.116px;white-space:pre;-webkit-text-stroke:0.35px #fff;">Exportaciones(2)</div>
<div style="position:absolute;left:1014.40px;top:340.02px;font-size:19px;line-height:19px;color:#4165d8;letter-spacing:-0.507px;white-space:pre;-webkit-text-stroke:0.35px #fff;">$270,951,718.000000</div>
<div style="position:absolute;left:1014.40px;top:370.02px;font-size:19px;line-height:19px;color:#4165d8;letter-spacing:-0.133px;white-space:pre;-webkit-text-stroke:0.35px #fff;">$80,377,807.000000</div>
<div style="position:absolute;left:1277px;top:300px;width:589.5px;height:93.5px;border-left:1px solid #b8b8b8;box-sizing:border-box;"></div>
<div style="position:absolute;left:1277px;top:300px;width:589.5px;height:1px;background:#d8d8d8;"></div>
<div style="position:absolute;left:1339.5px;top:300px;width:1px;height:33px;background:#d8d8d8;"></div>
<div style="position:absolute;left:1603.0px;top:300px;width:1px;height:33px;background:#d8d8d8;"></div>
<div style="position:absolute;left:1865.5px;top:300px;width:1px;height:33px;background:#d8d8d8;"></div>
<div style="position:absolute;left:1278px;top:333px;width:588.5px;height:1px;background:#b8b8b8;"></div>
<div style="position:absolute;left:1278px;top:363px;width:588.5px;height:1px;background:#b8b8b8;"></div>
<div style="position:absolute;left:1278px;top:392.5px;width:588.5px;height:1px;background:#b8b8b8;"></div>
<div style="position:absolute;left:1339.5px;top:333px;width:1px;height:60.5px;background:#9c9c9c;"></div>
<div style="position:absolute;left:1603.0px;top:333px;width:1px;height:60.5px;background:#9c9c9c;"></div>
<div style="position:absolute;left:1865.5px;top:333px;width:1px;height:60.5px;background:#9c9c9c;"></div>
<div style="position:absolute;left:1340.5px;top:334px;width:262.5px;height:29px;background:#0078d7;"></div>
<svg style="position:absolute;left:1285.2px;top:344px" width="8" height="12"><path d="M0.3 0.4v11.2L6.7 6z" fill="#222"/></svg>
<div style="position:absolute;left:1613.51px;top:307.42px;font-size:19px;line-height:19px;color:#202020;letter-spacing:-0.185px;white-space:pre;-webkit-text-stroke:0.35px #fff;">USD</div>
<div style="position:absolute;left:1345.52px;top:340.02px;font-size:19px;line-height:19px;color:#fff;letter-spacing:0.207px;white-space:pre;-webkit-text-stroke:0.35px #0078d7;">Importaciones(1)</div>
<div style="position:absolute;left:1345.52px;top:370.02px;font-size:19px;line-height:19px;color:#4165d8;letter-spacing:0.116px;white-space:pre;-webkit-text-stroke:0.35px #fff;">Exportaciones(2)</div>
<div style="position:absolute;left:1609.70px;top:340.02px;font-size:19px;line-height:19px;color:#4165d8;letter-spacing:-0.580px;white-space:pre;-webkit-text-stroke:0.35px #fff;">$14,213,779.490000</div>
<div style="position:absolute;left:1609.70px;top:370.02px;font-size:19px;line-height:19px;color:#4165d8;letter-spacing:-0.356px;white-space:pre;-webkit-text-stroke:0.35px #fff;">$4,230,615.580000</div>
<svg style="position:absolute;left:0;top:400px" width="1917" height="600" viewBox="0 400 1917 600"><circle cx="967.5" cy="710.45" r="242.5" fill="#f08080"/><path d="M967.5 710.45L999.71 470.10A242.5 242.5 0 0 1 1210.0 710.45Z" fill="#6495ed"/></svg>
<div style="position:absolute;left:980.73px;top:622.90px;font-size:14.3px;line-height:14.3px;color:rgba(0,0,20,0.82);letter-spacing:-0.331px;white-space:pre;">22.88% - $80,377,807.00</div>
<div style="position:absolute;left:795.33px;top:782.90px;font-size:14.3px;line-height:14.3px;color:rgba(20,0,0,0.82);letter-spacing:-0.402px;white-space:pre;">77.12% - $270,951,718.00</div>
<svg style="position:absolute;left:0;top:400px" width="1917" height="600" viewBox="0 400 1917 600"><circle cx="1562.45" cy="710.45" r="242.5" fill="#f08080"/><path d="M1562.45 710.45L1593.75 469.98A242.5 242.5 0 0 1 1804.95 710.45Z" fill="#6495ed"/></svg>
<div style="position:absolute;left:1579.63px;top:622.90px;font-size:14.3px;line-height:14.3px;color:rgba(0,0,20,0.82);letter-spacing:-0.329px;white-space:pre;">22.94% - $4,230,615.58</div>
<div style="position:absolute;left:1393.93px;top:782.90px;font-size:14.3px;line-height:14.3px;color:rgba(20,0,0,0.82);letter-spacing:-0.321px;white-space:pre;">77.06% - $14,213,779.49</div>
<svg style="position:absolute;left:142px;top:1010px" width="26.00" height="23.00" viewBox="0 0 26 23"><polygon points="8.80,7.00 9.60,5.20 12.00,4.60 14.00,5.00 15.60,3.20 17.60,2.50 19.50,3.60 22.00,3.20 23.60,4.40 24.50,6.40 23.60,8.60 24.60,11.00 23.80,13.60 24.60,16.20 23.60,18.40 24.00,21.00 22.20,21.60 21.20,19.40 20.40,16.80 18.40,16.00 16.80,17.60 15.20,19.80 13.40,21.80 11.00,21.20 10.40,18.40 8.20,16.60 6.30,15.00 7.00,12.00 8.00,9.60" fill="#0d2f8c" stroke="#0d2f8c" stroke-width="0.8" stroke-linejoin="round"/><path d="M9.8 0.9C3.2 4 -0.5 13 4.6 21.6" fill="none" stroke="#1f2f63" stroke-width="1.25" stroke-dasharray="3 1.7" opacity="0.9"/><path d="M11.5 2.2C6 5.5 3.4 12.5 7 20" fill="none" stroke="#9fb3d9" stroke-width="0.9" opacity="0.7"/></svg><svg style="position:absolute;left:128px;top:1030px" width="54" height="12" viewBox="128 1030 54 12"><g font-family="Liberation Sans, sans-serif" font-weight="bold" font-style="italic" font-size="5.6"><text x="129.5" y="1037.6" fill="#7f8ea8" textLength="18.5" lengthAdjust="spacingAndGlyphs">GRUPO</text><text x="148.3" y="1037.6" fill="#63bfe8" textLength="30.5" lengthAdjust="spacingAndGlyphs">SANCORZEP</text></g><rect x="139" y="1039" width="32" height="0.8" fill="#bdbdbd"/></svg>
</body></html>
